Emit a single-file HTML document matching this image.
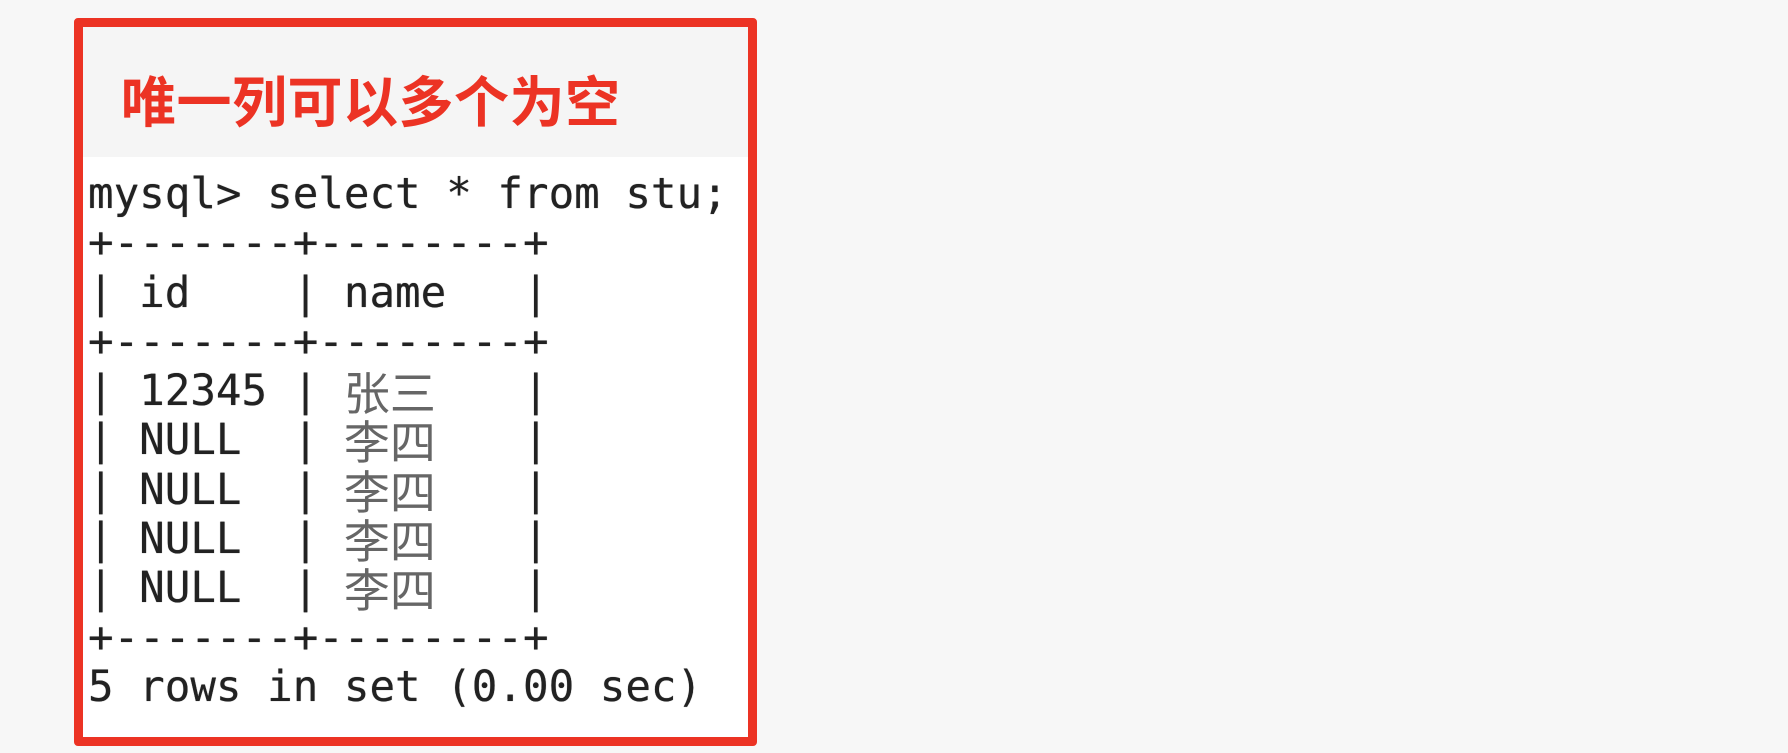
<!DOCTYPE html>
<html><head><meta charset="utf-8"><style>
html,body{margin:0;padding:0;background:#f7f7f7;width:1788px;height:753px;overflow:hidden}
.box{position:absolute;left:74px;top:18px;width:665px;height:710px;border:9px solid #ec3324;border-radius:4px;background:#fff}
.head{position:absolute;left:0;top:0;width:665px;height:130px;background:#f5f5f5}
.title{position:absolute;left:38px;top:46px;font:bold 55px/60px "Liberation Sans","Noto Sans CJK SC",sans-serif;color:#ec3324;letter-spacing:0.5px;white-space:nowrap}
pre{position:absolute;left:88px;top:170px;margin:0;font:42.5px/49.3px "DejaVu Sans Mono","Liberation Mono",monospace;color:#222;text-shadow:0 0 0.6px #222}
.c{display:inline-block;width:102.4px;font-family:"Noto Sans CJK SC",sans-serif;color:#666;font-size:46px;line-height:49.3px;vertical-align:top;text-shadow:none;white-space:nowrap}
</style></head><body>
<div class="box"><div class="head"></div><div class="title">唯一列可以多个为空</div></div>
<pre>mysql&gt; select * from stu;
+-------+--------+
| id    | name   |
+-------+--------+
| 12345 | <span class="c">张三</span>   |
| NULL  | <span class="c">李四</span>   |
| NULL  | <span class="c">李四</span>   |
| NULL  | <span class="c">李四</span>   |
| NULL  | <span class="c">李四</span>   |
+-------+--------+
5 rows in set (0.00 sec)</pre>
</body></html>
